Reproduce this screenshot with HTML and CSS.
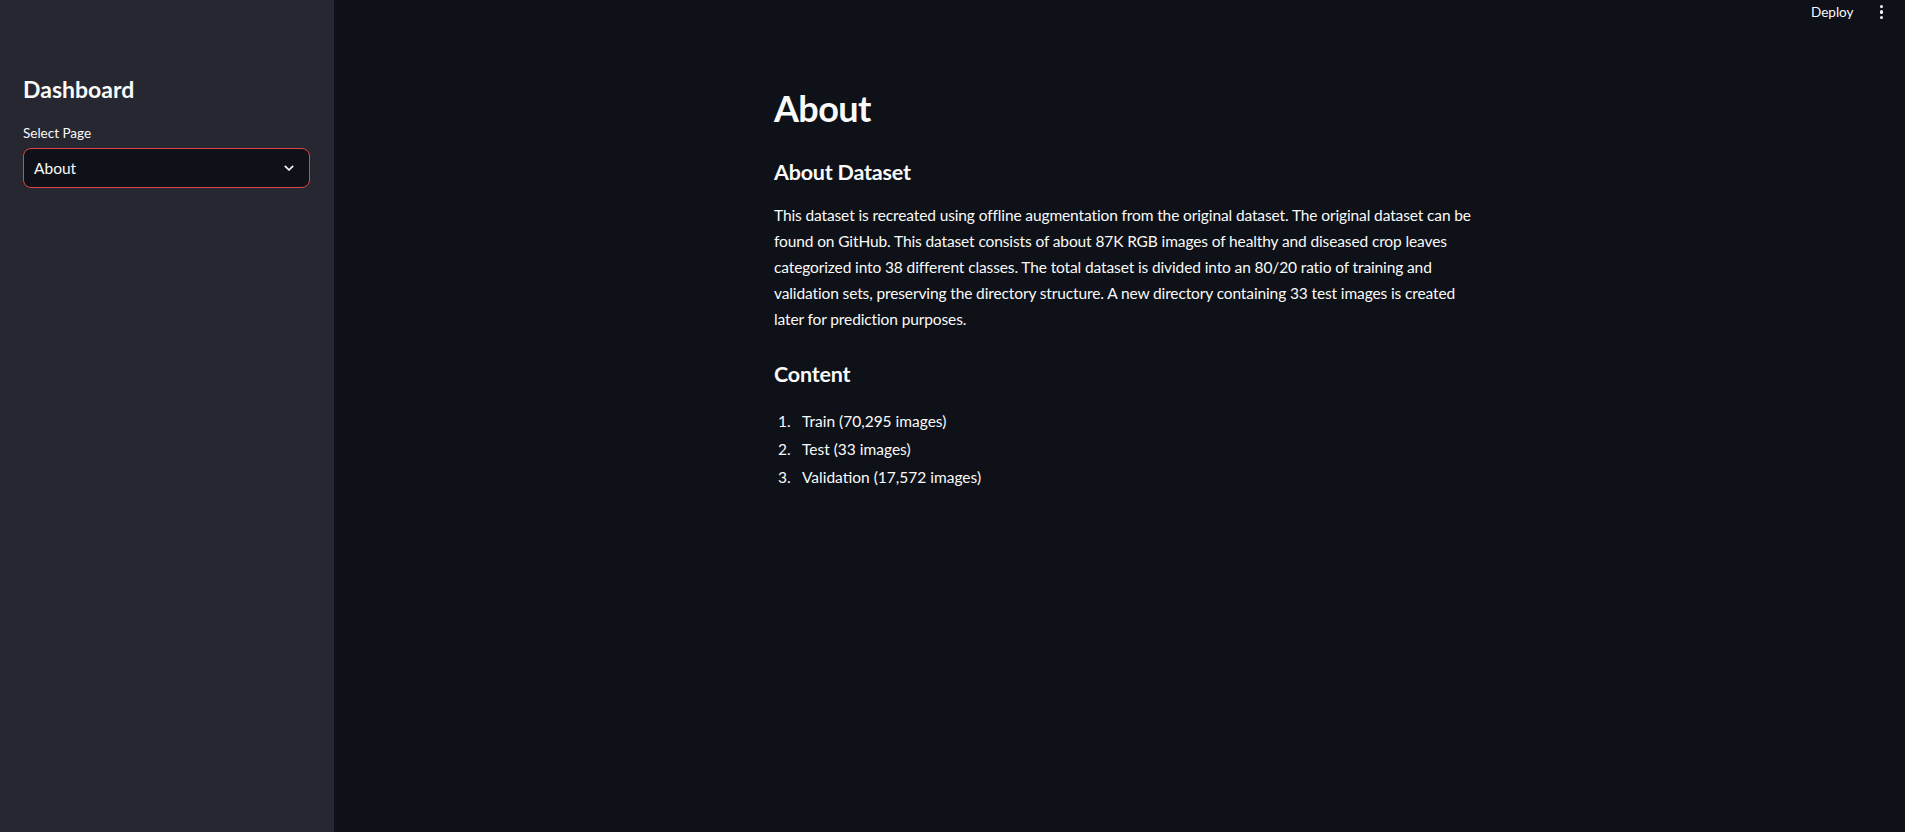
FILE: index.html
```html
<!DOCTYPE html>
<html lang="en">
<head>
<meta charset="utf-8">
<title>Dashboard</title>
<link rel="stylesheet" href="styles.css">
</head>
<body>
<div class="app">
  <aside class="sidebar">
    <h2 class="side-title">Dashboard</h2>
    <label class="field-label">Select Page</label>
    <div class="select">
      <span class="select-value">About</span>
      <svg class="chevron" width="16" height="16" viewBox="0 0 24 24" aria-hidden="true"><path d="M6.5 9.5l5.5 5.5 5.5-5.5" fill="none" stroke="#fafafa" stroke-width="2.6" stroke-linecap="round" stroke-linejoin="round"/></svg>
    </div>
  </aside>
  <main class="main">
    <header class="toolbar">
      <span class="deploy">Deploy</span>
      <span class="kebab" aria-hidden="true"><i></i><i></i><i></i></span>
    </header>
    <div class="content-wrap">
      <section class="block">
        <h1 class="title">About</h1>
        <h3 class="subhead first">About Dataset</h3>
        <p class="para">This dataset is recreated using offline augmentation from the original dataset. The original dataset can be found on GitHub. This dataset consists of about 87K RGB images of healthy and diseased crop leaves categorized into 38 different classes. The total dataset is divided into an 80/20 ratio of training and validation sets, preserving the directory structure. A new directory containing 33 test images is created later for prediction purposes.</p>
        <h3 class="subhead second">Content</h3>
        <ol class="list">
          <li>Train (70,295 images)</li>
          <li>Test (33 images)</li>
          <li>Validation (17,572 images)</li>
        </ol>
      </section>
    </div>
  </main>
</div>
</body>
</html>
```
FILE: styles.css
```css
* { box-sizing: border-box; }
html, body { margin: 0; padding: 0; height: 100%; }
body {
  font-family: Lato, "Noto Sans", sans-serif;
  color: #fafafa;
  background: #0e1117;
}
.app {
  display: flex;
  height: 832px;
  overflow: hidden;
}
.sidebar {
  width: 334px;
  flex: 0 0 334px;
  background: #262730;
  padding: 76px 24px 0 23px;
  display: flex;
  flex-direction: column;
}
.side-title {
  margin: 0;
  font-size: 23px;
  line-height: 1.2;
  font-weight: 700;
}
.field-label {
  margin-top: 19px;
  font-size: 13.5px;
  line-height: 20px;
}
.select {
  margin-top: 5px;
  height: 40px;
  border: 1px solid #e04444;
  border-radius: 8px;
  background: #0e1117;
  display: flex;
  align-items: center;
  justify-content: space-between;
  padding: 0 12px 0 10px;
}
.select-value { font-size: 15.5px; }
.chevron { display: block; }
.main {
  flex: 1;
  display: flex;
  flex-direction: column;
  background: #0e1117;
}
.toolbar {
  height: 24px;
  display: flex;
  align-items: center;
  justify-content: flex-end;
  gap: 26px;
  padding-right: 22px;
}
.deploy { font-size: 13.5px; }
.kebab {
  display: flex;
  flex-direction: column;
  gap: 2px;
}
.kebab i {
  display: block;
  width: 3.5px;
  height: 3.5px;
  border-radius: 50%;
  background: #fafafa;
}
.content-wrap {
  display: flex;
  justify-content: center;
  padding-left: 13px;
}
.block {
  width: 704px;
  padding-top: 63px;
}
.title {
  margin: 0;
  font-size: 36px;
  line-height: 1.2;
  font-weight: 700;
  letter-spacing: -0.6px;
}
.subhead {
  margin: 0;
  font-size: 21.5px;
  line-height: 1.2;
  font-weight: 700;
  letter-spacing: -0.2px;
}
.subhead.first { margin-top: 30px; }
.subhead.second { margin-top: 30px; }
.para {
  margin: 16px 0 0;
  font-size: 15.5px;
  line-height: 26px;
  letter-spacing: -0.12px;
}
.list {
  list-style: none;
  counter-reset: item;
  margin: 20px 0 0;
  padding: 0;
}
.list li {
  counter-increment: item;
  display: flex;
  font-size: 15.5px;
  line-height: 26px;
  margin-bottom: 2px;
}
.list li::before {
  content: counter(item) ".";
  flex: 0 0 24px;
  padding-left: 4px;
}
```
